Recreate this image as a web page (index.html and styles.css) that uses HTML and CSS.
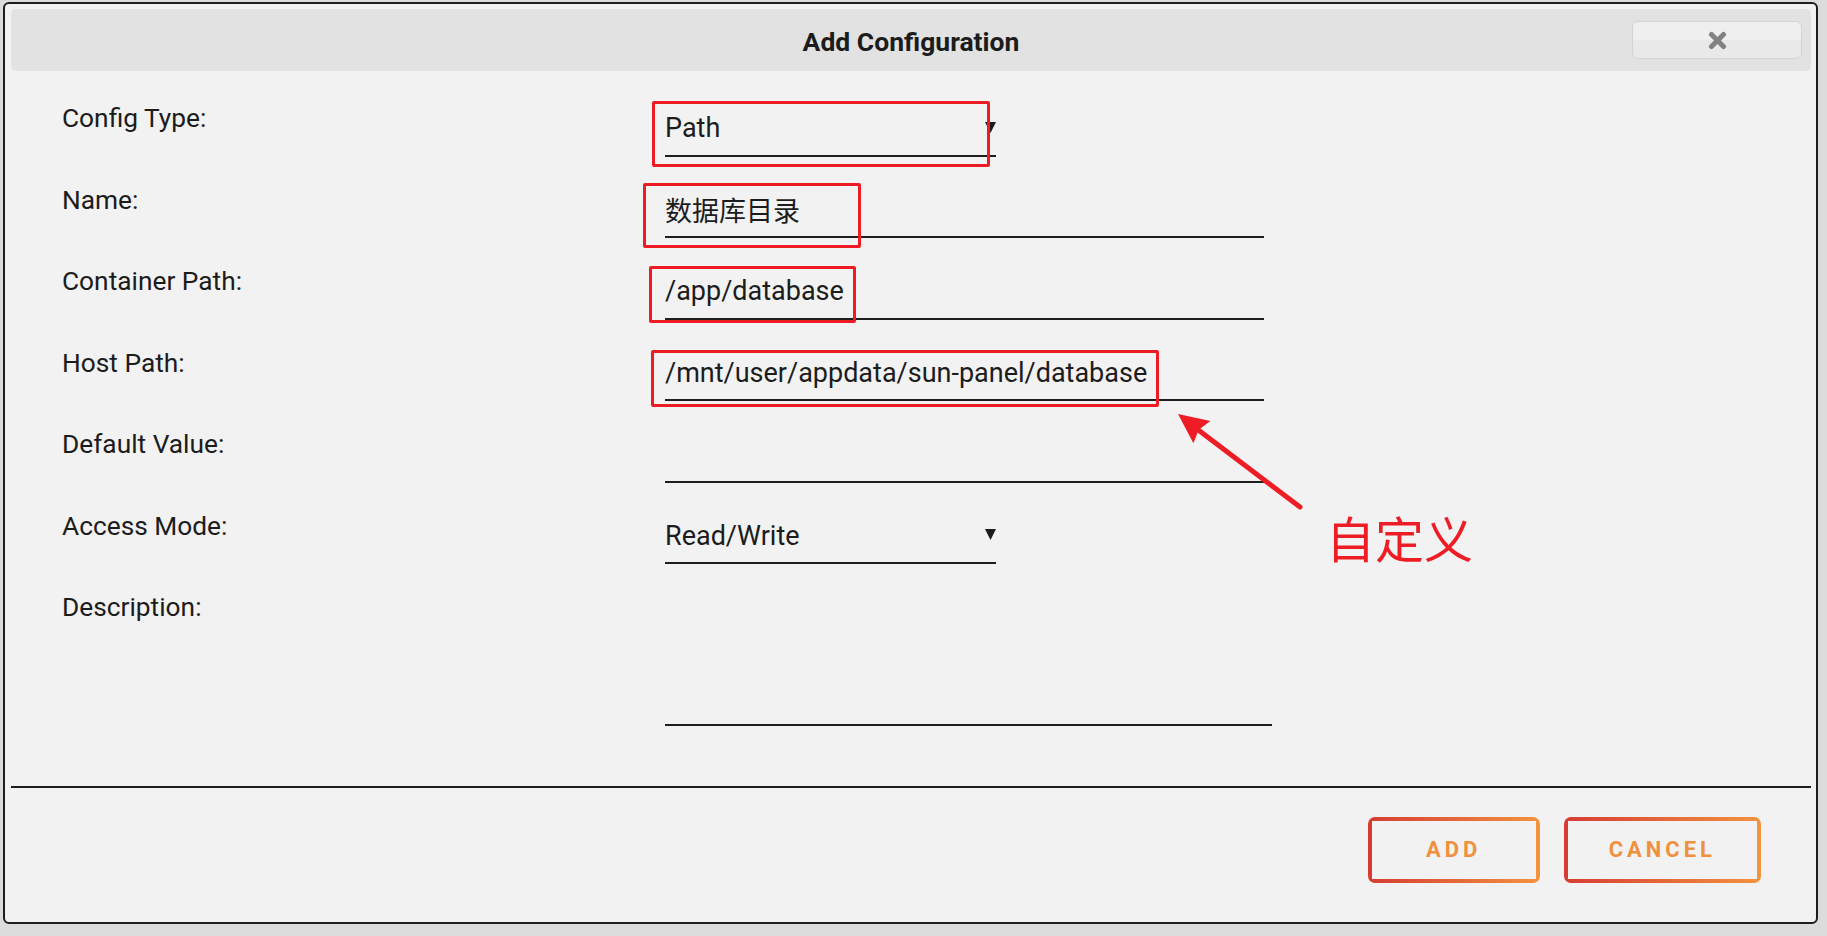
FILE: index.html
```html
<!DOCTYPE html>
<html>
  <head>
    <title>Add Configuration</title>
    <link rel="stylesheet" href="styles.css">
  </head>
  <body>
    <div class="dialog">
      <div class="dialog-header">
        <span></span>
        <p class="dialog-title">Add Configuration</p>
        <button class="close-button" title="Close">
          <svg width="19" height="19" viewBox="0 0 19 19">
            <path d="M3.5 3.5L15.5 15.5M15.5 3.5L3.5 15.5" stroke="#828282" stroke-width="5" stroke-linecap="round"/>
          </svg>
        </button>
      </div>

      <div class="config-form">
        <div class="form-row">
          <label class="form-label">Config Type:</label>
          <div class="form-field">
            <select class="form-select">
              <option>Path</option>
              <option>Port</option>
              <option>Variable</option>
              <option>Label</option>
              <option>Device</option>
            </select>
            <svg class="select-arrow" viewBox="0 0 11 11">
              <polygon points="0,0 11,0 5.5,11" fill="#1c1c1c"/>
            </svg>
            <span class="mark mark-type"></span>
          </div>
        </div>

        <div class="form-row">
          <label class="form-label">Name:</label>
          <div class="form-field">
            <input class="form-input" type="text" value="数据库目录">
            <span class="mark mark-name"></span>
          </div>
        </div>

        <div class="form-row">
          <label class="form-label">Container Path:</label>
          <div class="form-field">
            <input class="form-input" type="text" value="/app/database">
            <span class="mark mark-container"></span>
          </div>
        </div>

        <div class="form-row">
          <label class="form-label">Host Path:</label>
          <div class="form-field">
            <input class="form-input" type="text" value="/mnt/user/appdata/sun-panel/database">
            <span class="mark mark-host"></span>
          </div>
        </div>

        <div class="form-row">
          <label class="form-label">Default Value:</label>
          <div class="form-field">
            <input class="form-input" type="text" value="">
          </div>
        </div>

        <div class="form-row">
          <label class="form-label">Access Mode:</label>
          <div class="form-field">
            <select class="form-select">
              <option>Read/Write</option>
              <option>Read Only</option>
              <option>Read/Write - Slave</option>
              <option>Read/Write - Shared</option>
            </select>
            <svg class="select-arrow" viewBox="0 0 11 11">
              <polygon points="0,0 11,0 5.5,11" fill="#1c1c1c"/>
            </svg>
          </div>
        </div>

        <div class="form-row form-row-tall">
          <label class="form-label">Description:</label>
          <div class="form-field">
            <textarea class="form-textarea"></textarea>
          </div>
        </div>
      </div>

      <div class="dialog-footer">
        <button class="dialog-button">Add</button>
        <button class="dialog-button">Cancel</button>
      </div>

      <svg class="note-arrow" viewBox="0 0 140 110">
        <line x1="130" y1="102" x2="27" y2="24" stroke="#ee1c25" stroke-width="5" stroke-linecap="round"/>
        <polygon points="8,9 40.4,16.1 28.7,24.8 23.4,38.3" fill="#ee1c25"/>
      </svg>
      <p class="note-text">自定义</p>
    </div>
  </body>
</html>
```

FILE: styles.css
```css
body {
  margin: 0;
  background-color: #dcdcdc;
  color: #1c1c1c;
  font-family: Roboto, "Noto Sans CJK SC", sans-serif;
}

.dialog {
  position: relative;
  box-sizing: border-box;
  width: 1815px;
  margin: 2px 0 0 3px;
  padding: 5px 5px 0 6px;
  border: 2px solid #1e1e1e;
  border-radius: 6px;
  background-color: #f2f2f2;
}

.dialog-header {
  display: grid;
  grid-template-columns: 1fr auto 1fr;
  align-items: center;
  height: 62px;
  border-radius: 5px;
  background-color: #e2e2e2;
}

.dialog-title {
  margin: 0;
  padding-top: 3px;
  font-size: 26.5px;
  font-weight: bold;
}

.close-button {
  justify-self: end;
  display: flex;
  align-items: center;
  justify-content: center;
  width: 170px;
  height: 38px;
  margin-right: 9px;
  padding: 0;
  border: 1px solid #d3d3d3;
  border-radius: 6px;
  background: linear-gradient(#efefef 50%, #e9e9e9 50%);
  cursor: pointer;
}

.config-form {
  padding: 31.3px 0 60px 51px;
}

.form-row {
  display: flex;
  height: 81.5px;
}

.form-row-tall {
  height: auto;
}

.form-label {
  flex: none;
  width: 603px;
  font-size: 26.3px;
  line-height: 32px;
}

.form-field {
  position: relative;
  margin-top: 9.2px;
}

.form-input,
.form-select,
.form-textarea {
  display: block;
  box-sizing: border-box;
  margin: 0;
  padding: 0 0 9.5px;
  border: none;
  border-bottom: 2px solid #1e1e1e;
  border-radius: 0;
  outline: none;
  background-color: transparent;
  color: #1c1c1c;
  font-family: inherit;
  font-size: 27px;
  line-height: 34px;
}

.form-input {
  width: 599px;
  height: 45.5px;
}

.form-select {
  width: 331px;
  height: 45.5px;
  -webkit-appearance: none;
  appearance: none;
}

.form-textarea {
  width: 607px;
  height: 125.5px;
  resize: none;
}

.select-arrow {
  position: absolute;
  top: 10.5px;
  right: 0;
  width: 11px;
  height: 11px;
  pointer-events: none;
}

.mark {
  position: absolute;
  box-sizing: border-box;
  border: 3px solid #ed1c24;
  border-radius: 2px;
  pointer-events: none;
}

.mark-type {
  left: -13px;
  top: -10.5px;
  width: 338px;
  height: 66px;
}

.mark-name {
  left: -22px;
  top: -10px;
  width: 218px;
  height: 65px;
}

.mark-container {
  left: -16px;
  top: -8.5px;
  width: 207px;
  height: 57px;
}

.mark-host {
  left: -14px;
  top: -6px;
  width: 508px;
  height: 57px;
}

.dialog-footer {
  display: flex;
  justify-content: flex-end;
  gap: 24px;
  padding: 29px 50px 39px 0;
  border-top: 2px solid #1e1e1e;
}

.dialog-button {
  box-sizing: border-box;
  min-width: 172px;
  height: 66px;
  padding: 0 45px;
  border: none;
  border-radius: 7px;
  background:
    linear-gradient(90deg, #d63c34, #f2933f) 0 0 / 100% 4px no-repeat,
    linear-gradient(90deg, #d63c34, #f2933f) 0 100% / 100% 4px no-repeat,
    linear-gradient(#d63c34, #d63c34) 0 0 / 4px 100% no-repeat,
    linear-gradient(#f2933f, #f2933f) 100% 0 / 4px 100% no-repeat;
  background-color: transparent;
  color: #f0913f;
  font-family: inherit;
  font-size: 22px;
  font-weight: bold;
  letter-spacing: 4px;
  text-transform: uppercase;
  cursor: pointer;
}

.note-arrow {
  position: absolute;
  left: 1165px;
  top: 401px;
  width: 140px;
  height: 110px;
}

.note-text {
  position: absolute;
  left: 1321px;
  top: 508px;
  margin: 0;
  color: #ee1c25;
  font-family: "Noto Sans CJK SC", sans-serif;
  font-size: 49px;
  line-height: 50px;
}
```
